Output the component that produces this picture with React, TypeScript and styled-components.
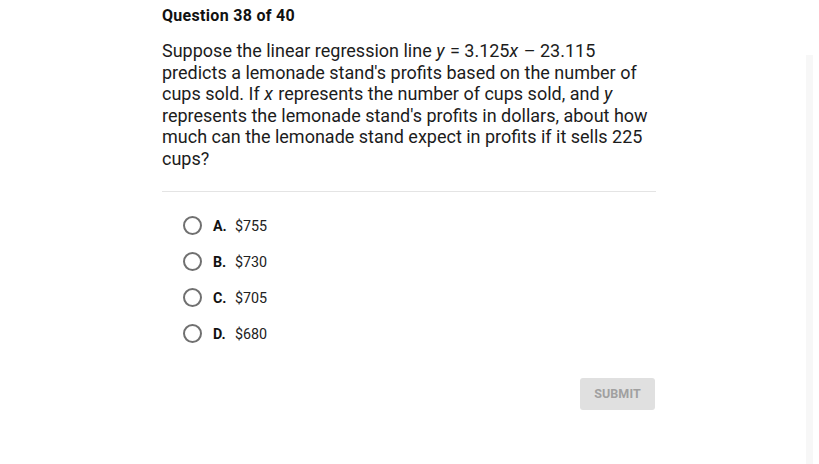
import * as React from "react";
import styled, { createGlobalStyle } from "styled-components";

const GlobalStyle = createGlobalStyle`
  html, body {
    margin: 0;
    padding: 0;
    background: #fff;
  }
  body {
    font-family: Roboto, "Liberation Sans", Arial, sans-serif;
    color: #1a1a1a;
  }
`;

const Page = styled.div`
  display: flex;
  width: 819px;
  height: 464px;
  overflow: hidden;
`;

const Main = styled.div`
  flex: 1;
  padding: 6px 0 0 162px;
`;

const Card = styled.div`
  width: 494px;
`;

const Heading = styled.h2`
  margin: 0;
  font-size: 16px;
  font-weight: 700;
  line-height: 20px;
  letter-spacing: 0.3px;
  color: #111;
`;

const Prompt = styled.p`
  margin: 14px 0 0;
  font-size: 18px;
  line-height: 21.6px;
  color: #1c1c1c;
  padding-right: 4px;
`;

const Var = styled.i`
  font-style: italic;
  padding-right: 1px;
`;

const Divider = styled.hr`
  margin: 21px 0 0;
  border: none;
  border-top: 1px solid #e4e4e4;
`;

const Choices = styled.ul`
  list-style: none;
  margin: 24px 0 0;
  padding: 0 0 0 21px;
  display: flex;
  flex-direction: column;
  gap: 16px;
`;

const Choice = styled.li`
  display: flex;
  align-items: center;
  height: 20px;
  font-size: 14.3px;
`;

const Radio = styled.span`
  width: 15px;
  height: 15px;
  border: 2px solid #707070;
  border-radius: 50%;
  margin-right: 11px;
  flex-shrink: 0;
`;

const Letter = styled.b`
  font-weight: 700;
  width: 22px;
  color: #111;
`;

const Value = styled.span`
  color: #222;
`;

const Footer = styled.div`
  display: flex;
  justify-content: flex-end;
  margin-top: 34px;
  padding-right: 1px;
`;

const SubmitButton = styled.button`
  width: 75px;
  height: 32px;
  border: none;
  border-radius: 3px;
  background: #e0e0e0;
  color: #a0a0a0;
  font-family: Roboto, "Liberation Sans", Arial, sans-serif;
  font-size: 12.5px;
  font-weight: 700;
  letter-spacing: 0.1px;
`;

const Rail = styled.div`
  width: 7px;
  margin: 55px 6px 0 0;
  background: #f7f7f7;
`;

const choices = [
  { letter: "A.", value: "$755" },
  { letter: "B.", value: "$730" },
  { letter: "C.", value: "$705" },
  { letter: "D.", value: "$680" },
];

export default function App() {
  return (
    <>
      <GlobalStyle />
      <Page>
        <Main>
          <Card>
            <Heading>Question 38 of 40</Heading>
            <Prompt>
              Suppose the linear regression line <Var>y</Var> = 3.125<Var>x</Var> – 23.115
              predicts a lemonade stand's profits based on the number of cups sold. If{" "}
              <Var>x</Var> represents the number of cups sold, and <Var>y</Var> represents the
              lemonade stand's profits in dollars, about how much can the lemonade stand
              expect in profits if it sells 225 cups?
            </Prompt>
            <Divider />
            <Choices>
              {choices.map((c) => (
                <Choice key={c.letter}>
                  <Radio />
                  <Letter>{c.letter}</Letter>
                  <Value>{c.value}</Value>
                </Choice>
              ))}
            </Choices>
            <Footer>
              <SubmitButton>SUBMIT</SubmitButton>
            </Footer>
          </Card>
        </Main>
        <Rail />
      </Page>
    </>
  );
}
